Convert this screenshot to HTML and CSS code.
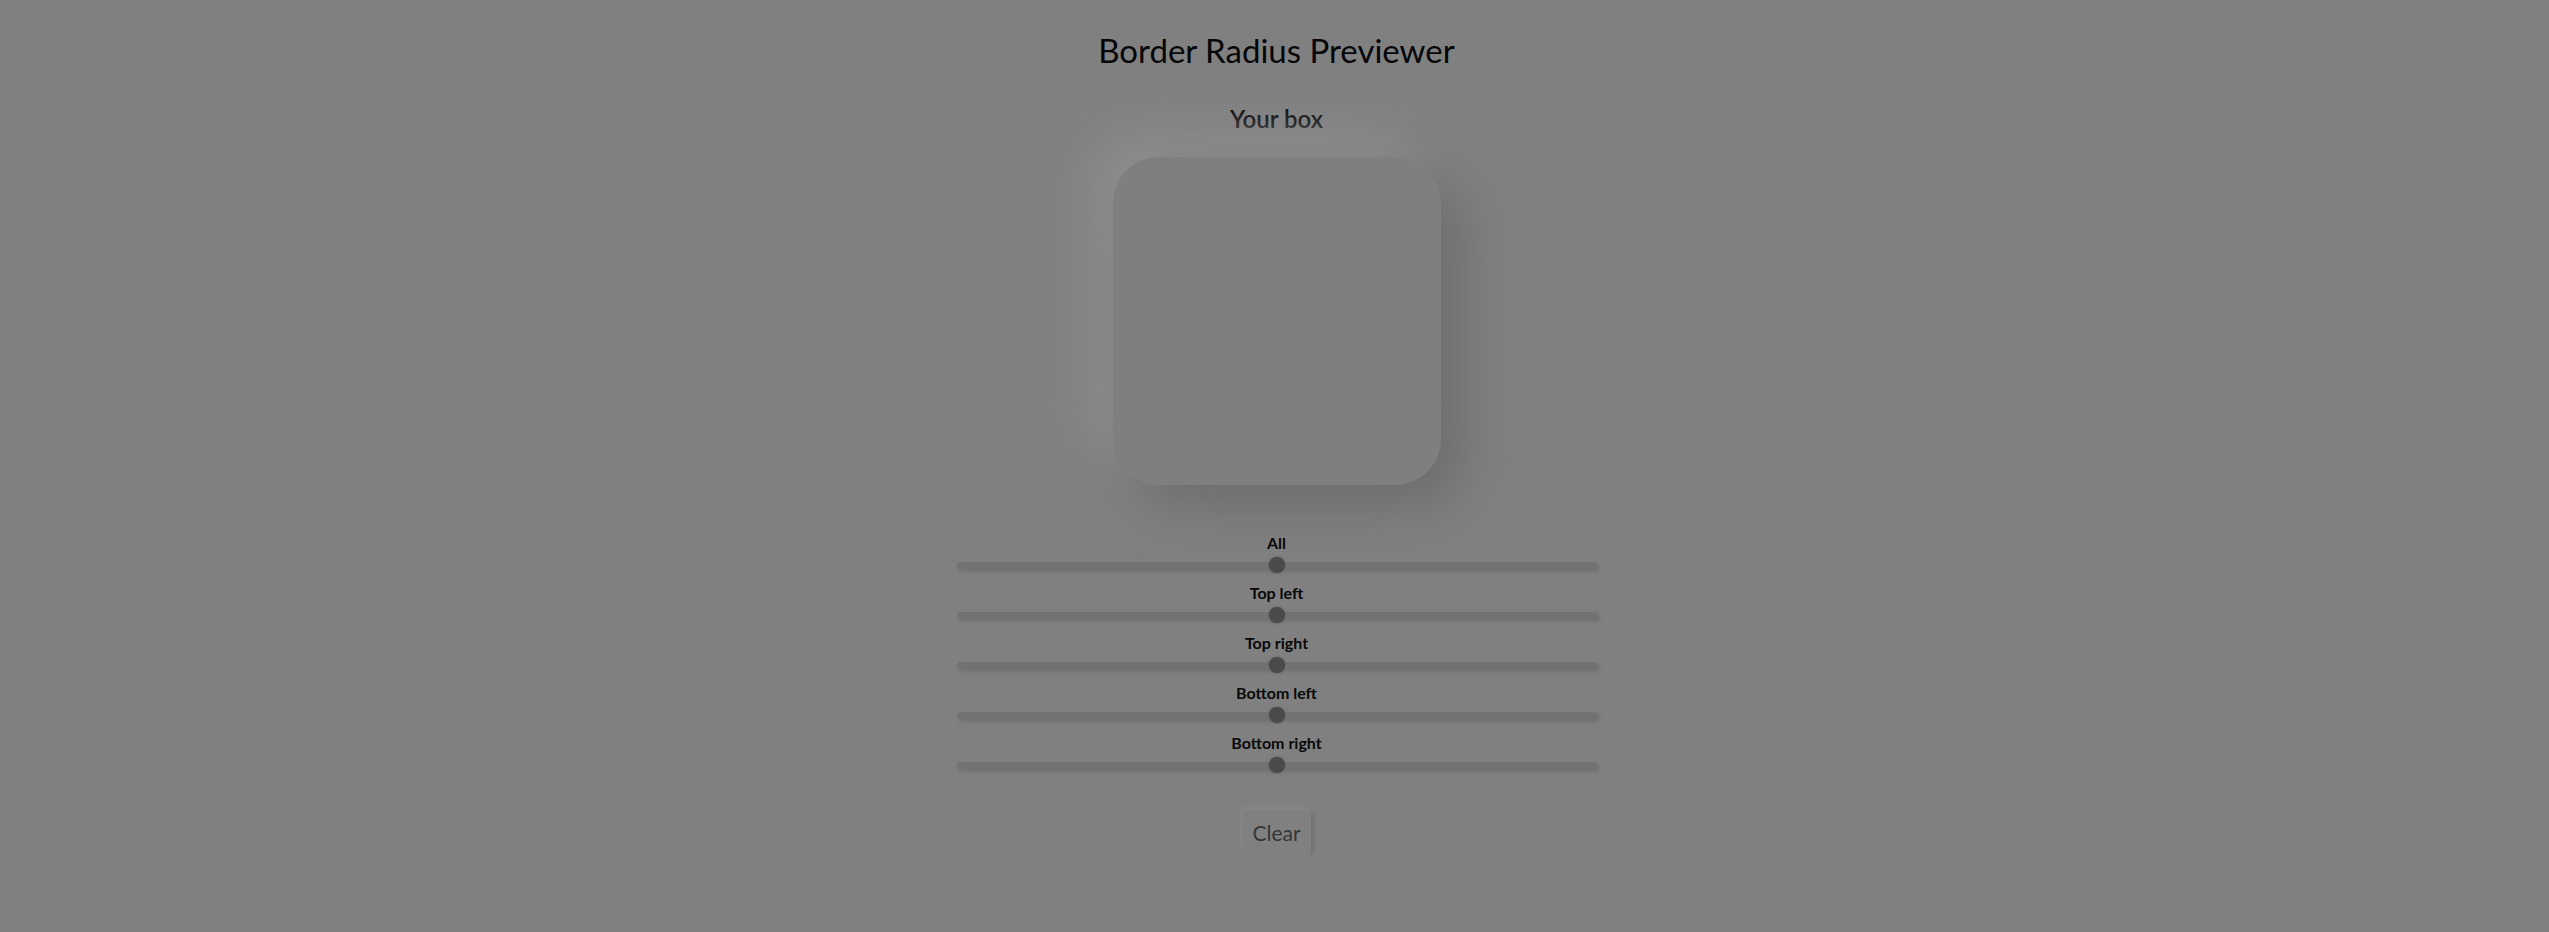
FILE: index.html
```html
<!DOCTYPE html>
<html lang="en">
<head>
<meta charset="utf-8">
<title>Border Radius Previewer</title>
<link rel="stylesheet" href="styles.css">
</head>
<body>
<main class="app">
  <h1 class="title">Border Radius Previewer</h1>
  <h2 class="subtitle">Your box</h2>
  <div class="preview"></div>
  <section class="controls">
    <label class="control">
      <span class="control-label">All</span>
      <input class="slider" type="range" min="0" max="100" value="50">
    </label>
    <label class="control">
      <span class="control-label">Top left</span>
      <input class="slider" type="range" min="0" max="100" value="50">
    </label>
    <label class="control">
      <span class="control-label">Top right</span>
      <input class="slider" type="range" min="0" max="100" value="50">
    </label>
    <label class="control">
      <span class="control-label">Bottom left</span>
      <input class="slider" type="range" min="0" max="100" value="50">
    </label>
    <label class="control">
      <span class="control-label">Bottom right</span>
      <input class="slider" type="range" min="0" max="100" value="50">
    </label>
  </section>
  <button class="clear" type="button">Clear</button>
</main>
</body>
</html>
```

FILE: styles.css
```css
html, body {
  margin: 0;
  padding: 0;
  background: #808080;
}

body {
  font-family: Lato, "Noto Sans", sans-serif;
  color: #050505;
}

.app {
  display: flex;
  flex-direction: column;
  align-items: center;
  padding-left: 4px;
}

.title {
  margin: 30px 0 0;
  font-size: 33px;
  line-height: 40px;
  font-weight: 400;
}

.subtitle {
  margin: 34px 0 0;
  font-size: 24px;
  line-height: 29px;
  font-weight: 600;
  color: #000;
}

.preview {
  margin-top: 24px;
  width: 328px;
  height: 328px;
  border-radius: 46px;
  background: #7f7f7f;
  box-shadow: 22px 22px 50px #6e6e6e, -22px -22px 50px #8f8f8f;
}

.controls {
  margin-top: 48px;
  display: flex;
  flex-direction: column;
  align-items: center;
  gap: 10px;
}

.control {
  display: flex;
  flex-direction: column;
  align-items: center;
  gap: 5px;
}

.control-label {
  font-size: 16px;
  line-height: 19px;
  font-weight: 700;
  color: #080808;
}

.slider {
  -webkit-appearance: none;
  appearance: none;
  margin: 0;
  width: 640px;
  height: 16px;
  background: transparent;
}

.slider::-webkit-slider-runnable-track {
  height: 7px;
  border-radius: 4px;
  background: #727272;
  box-shadow: 2px 2px 4px #6c6c6c, -1px -1px 2px #858585;
}

.slider::-webkit-slider-thumb {
  -webkit-appearance: none;
  appearance: none;
  width: 16px;
  height: 16px;
  margin-top: -4.5px;
  border-radius: 50%;
  background: #4a4a4a;
  box-shadow: 0 0 2px #4f4f4f;
}

.clear {
  margin-top: 37px;
  width: 68px;
  height: 45px;
  border: none;
  border-radius: 4px;
  background: #808080;
  color: #363636;
  font-family: Lato, "Noto Sans", sans-serif;
  font-size: 21px;
  box-shadow: 2px 2px 5px #6e6e6e, -2px -2px 5px #8c8c8c;
  padding: 0;
}
```
